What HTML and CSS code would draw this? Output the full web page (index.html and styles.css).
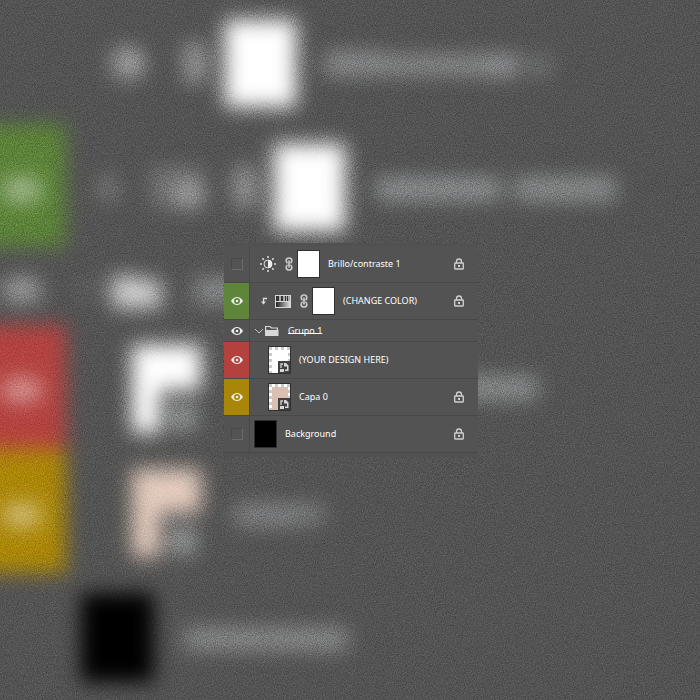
FILE: index.html
```html
<!DOCTYPE html>
<html lang="es">
  <head>
    <meta charset="UTF-8" />
    <meta name="viewport" content="width=device-width, initial-scale=1.0" />
    <title>Capas</title>
    <link rel="stylesheet" href="styles.css">
  </head>
  <body>
    <!-- Icons used more than once -->
    <svg class="sprite" aria-hidden="true">
      <symbol id="eye" viewBox="0 0 12 10">
        <path d="M0 5Q2.500 1 6 1Q9.500 1 12 5Q9.500 9 6 9Q2.500 9 0 5Z" fill="#ececec" />
        <circle class="pupil" cx="6" cy="5" r="3" />
        <circle cx="6" cy="5" r="1.300" fill="#ececec" />
      </symbol>
      <symbol id="lock" viewBox="0 0 10 12">
        <path d="M2.500 5V3.500a2.500 2.500 0 0 1 5 0V5" fill="none" stroke="#d0d0d0" stroke-width="1.300" />
        <rect x=".7" y="5" width="8.600" height="6" rx=".5" fill="none" stroke="#d0d0d0" stroke-width="1.300" />
        <rect x="4" y="7" width="2" height="2" fill="#d0d0d0" />
      </symbol>
      <symbol id="chain" viewBox="0 0 8 14">
        <g fill="none" stroke="#c8c8c8" stroke-width="1.700">
          <path d="M2.600 6Q1.200 5.500 1.200 3.500Q1.200 1 4 1T6.800 3.500Q6.800 5.500 5.400 6" />
          <path d="M2.600 8Q1.200 8.500 1.200 10.500Q1.200 13 4 13T6.800 10.500Q6.800 8.500 5.400 8" />
          <path d="M4 3.500V10.500" />
        </g>
      </symbol>
      <symbol id="smart" viewBox="0 0 12 12">
        <rect width="12" height="12" fill="#414141" />
        <path d="M3 7V3H5" fill="none" stroke="#d6d6d6" stroke-width="1.300" />
        <path d="M6 2H8L10.500 4.500V10H7V8.500H9V5.500H6Z" fill="#d6d6d6" />
        <rect x="2" y="8" width="4" height="3" fill="#d6d6d6" />
      </symbol>
      <pattern id="checker" width="6" height="6" patternUnits="userSpaceOnUse">
        <rect width="6" height="6" fill="#fff" />
        <path d="M0 0H3V3H0ZM3 3H6V6H3Z" fill="#c9c9c9" />
      </pattern>
    </svg>

    <svg class="backdrop" viewBox="0 0 700 700" preserveAspectRatio="xMidYMid slice" aria-hidden="true">
      <filter id="soft" x="-100" y="-100" width="900" height="900" filterUnits="userSpaceOnUse" color-interpolation-filters="sRGB">
        <feGaussianBlur stdDeviation="10" />
      </filter>
      <filter id="grain" x="0" y="0" width="700" height="700" filterUnits="userSpaceOnUse" color-interpolation-filters="sRGB">
        <feTurbulence type="fractalNoise" baseFrequency=".9" numOctaves="3" />
        <feColorMatrix values="1 0 0 0 0  1 0 0 0 0  1 0 0 0 0  0 0 0 0 1" />
      </filter>
      <rect width="700" height="700" fill="#535353" />
      <g filter="url(#soft)">
        <!-- colour tags -->
        <path d="M-60 124H66V247H-60Z" fill="#5b8238" />
        <path d="M-60 325H66V449H-60Z" fill="#b3423f" />
        <path d="M-60 449H66V573H-60Z" fill="#aa8608" />
        <g fill="#fff">
          <ellipse cx="22" cy="190" rx="21" ry="12" opacity=".46" />
          <ellipse cx="22" cy="290" rx="21" ry="13" opacity=".42" />
          <ellipse cx="22" cy="390" rx="21" ry="12" opacity=".46" />
          <ellipse cx="22" cy="515" rx="21" ry="12" opacity=".46" />
        </g>
        <!-- row icons -->
        <g fill="#e6e6e6">
          <circle cx="127" cy="63" r="19" opacity=".32" />
          <circle cx="131" cy="63" r="9" opacity=".6" />
          <rect x="184" y="42" width="22" height="42" rx="8" opacity=".46" />
          <rect x="99" y="176" width="18" height="24" opacity=".28" />
          <rect x="150" y="166" width="53" height="42" opacity=".2" />
          <rect x="176" y="182" width="27" height="25" opacity=".42" />
          <rect x="234" y="166" width="22" height="42" rx="8" opacity=".46" />
          <rect x="76" y="282" width="28" height="12" opacity=".12" />
          <path d="M112 276H134L140 280H161V308H112Z" opacity=".85" />
        </g>
        <!-- layer names -->
        <g fill="#c6c9cb">
          <rect x="324" y="52" width="60" height="23" opacity=".48" />
          <rect x="384" y="55" width="134" height="20" opacity=".46" />
          <rect x="486" y="55" width="34" height="22" opacity=".2" />
          <rect x="528" y="55" width="24" height="20" opacity=".26" />
          <rect x="376" y="178" width="124" height="22" opacity=".52" />
          <rect x="514" y="178" width="102" height="22" opacity=".5" />
          <rect x="194" y="278" width="112" height="26" opacity=".44" />
          <rect x="420" y="377" width="118" height="22" opacity=".5" />
          <rect x="234" y="504" width="62" height="22" opacity=".4" />
          <rect x="296" y="504" width="28" height="20" opacity=".34" />
          <rect x="184" y="628" width="164" height="22" opacity=".46" />
        </g>
        <!-- thumbnails -->
        <rect x="225" y="20" width="71" height="87" fill="#fff" />
        <rect x="274" y="144" width="71" height="87" fill="#fff" />
        <path d="M132 345H201V390H160V433H132Z" fill="#fff" />
        <path d="M132 469H201V513H160V557H132Z" fill="#e3cbbd" />
        <g fill="#aeb0b0">
          <rect x="170" y="404" width="26" height="26" opacity=".75" />
          <rect x="170" y="528" width="26" height="26" opacity=".75" />
        </g>
        <rect x="81" y="593" width="73" height="89" fill="#000" />
      </g>
      <rect class="grain" width="700" height="700" filter="url(#grain)" />
    </svg>

    <main class="stage">
      <ul class="panel">
        <li class="layer">
          <label class="tag"><input type="checkbox" aria-label="Brillo/contraste 1"><svg class="eye"><use href="#eye" /></svg></label>
          <div class="info adjustment">
            <svg class="adjust" viewBox="0 0 16 16">
              <g stroke="#dedede" stroke-width="1.500">
                <path d="M8 0V2M8 14V16M0 8H2M14 8H16M2.400 2.400L3.800 3.800M12.200 12.200L13.600 13.600M2.400 13.600L3.800 12.200M12.200 3.800L13.600 2.400" />
                <circle cx="8" cy="8" r="4" fill="none" stroke-width="1" />
              </g>
              <path d="M8 4A4 4 0 0 1 8 12Z" fill="#eee" />
            </svg>
            <svg class="chain"><use href="#chain" /></svg>
            <span class="thumb"></span>
            <span class="name">Brillo/contraste 1</span>
            <svg class="lock"><use href="#lock" /></svg>
          </div>
        </li>
        <li class="layer">
          <label class="tag green"><input type="checkbox" aria-label="(CHANGE COLOR)" checked><svg class="eye"><use href="#eye" /></svg></label>
          <div class="info adjustment">
            <svg class="clip" viewBox="0 0 8 10"><path d="M7 2.500H3.500V7" fill="none" stroke="#ddd" stroke-width="1.300" /><path d="M1 5.500H6L3.500 8.500Z" fill="#ddd" /></svg>
            <svg class="adjust" viewBox="0 0 16 16">
              <linearGradient id="ramp"><stop stop-color="#222" /><stop offset="1" stop-color="#ddd" /></linearGradient>
              <rect x=".5" y="2.500" width="15" height="12" fill="#333" stroke="#d8d8d8" />
              <path d="M4 3H6V8H4ZM8 3H10V8H8ZM11 3H12V8H11ZM13 3H15V8H13Z" fill="#aaa" />
              <path d="M1 8.500H15" stroke="#d8d8d8" />
              <rect x="1" y="9" width="14" height="5" fill="url(#ramp)" />
            </svg>
            <svg class="chain"><use href="#chain" /></svg>
            <span class="thumb"></span>
            <span class="name">(CHANGE COLOR)</span>
            <svg class="lock"><use href="#lock" /></svg>
          </div>
        </li>
        <li class="layer group">
          <label class="tag"><input type="checkbox" aria-label="Grupo 1" checked><svg class="eye"><use href="#eye" /></svg></label>
          <div class="info">
            <button class="toggle" aria-label="Abrir grupo"><svg viewBox="0 0 10 6"><path d="M1 1L5 5L9 1" fill="none" stroke="#c4c4c4" /></svg></button>
            <svg class="folder" viewBox="0 0 14 12"><path d="M.6 10.500V1.500H5L6.500 3H12.400V10.500Z" fill="none" stroke="#d8d8d8" stroke-width="1.200" /><path d="M1 5H13.500V11H1Z" fill="#d8d8d8" /></svg>
            <span class="name">Grupo 1</span>
          </div>
        </li>
        <li class="layer">
          <label class="tag red"><input type="checkbox" aria-label="(YOUR DESIGN HERE)" checked><svg class="eye"><use href="#eye" /></svg></label>
          <div class="info nested">
            <svg class="thumb" viewBox="0 0 21 26">
              <rect width="21" height="26" fill="url(#checker)" />
              <rect x="3" y="3" width="16" height="23" fill="#fff" />
              <use href="#smart" x="9" y="14" width="12" height="12" />
            </svg>
            <span class="name">(YOUR DESIGN HERE)</span>
          </div>
        </li>
        <li class="layer">
          <label class="tag yellow"><input type="checkbox" aria-label="Capa 0" checked><svg class="eye"><use href="#eye" /></svg></label>
          <div class="info nested">
            <svg class="thumb" viewBox="0 0 21 26">
              <rect width="21" height="26" fill="url(#checker)" />
              <rect x="3" y="3" width="16" height="23" fill="#d9c0b1" />
              <use href="#smart" x="9" y="14" width="12" height="12" />
            </svg>
            <span class="name">Capa 0</span>
            <svg class="lock"><use href="#lock" /></svg>
          </div>
        </li>
        <li class="layer">
          <label class="tag"><input type="checkbox" aria-label="Background"><svg class="eye"><use href="#eye" /></svg></label>
          <div class="info">
            <span class="thumb black"></span>
            <span class="name">Background</span>
            <svg class="lock"><use href="#lock" /></svg>
          </div>
        </li>
      </ul>
    </main>
  </body>
</html>
```
FILE: styles.css
```css
* {
  box-sizing: border-box;
}

body {
  margin: 0;
  background: #535353;
  color: #fff;
  font-family: "Noto Sans", "Open Sans", sans-serif;
  font-size: 9px;
  line-height: 12px;
}

.sprite {
  position: absolute;
  width: 0;
  height: 0;
}

.backdrop {
  position: fixed;
  inset: 0;
  width: 100%;
  height: 100%;
}

.grain {
  mix-blend-mode: overlay;
  opacity: 0.35;
}

.stage {
  position: relative;
  display: flex;
  align-items: center;
  min-height: 100vh;
  padding-left: 32%;
}

.panel {
  width: 254px;
  margin: 0;
  padding: 3px 0 4px;
  list-style: none;
  background: #515151;
}

.layer {
  display: flex;
  height: 37px;
  background: #535353;
  border-bottom: 1px solid #484848;
}

.group {
  height: 22px;
}

.tag {
  display: grid;
  place-items: center;
  width: 26px;
  border-right: 1px solid #484848;
  color: #535353;
}

.tag input,
.tag .eye {
  grid-area: 1 / 1;
}

.tag input {
  appearance: none;
  width: 12px;
  height: 12px;
  margin: 0;
  border: 1px solid #484848;
  border-right-color: #6a6a6a;
  border-bottom-color: #6a6a6a;
}

.tag input:checked {
  opacity: 0;
}

.tag input:not(:checked) + .eye {
  visibility: hidden;
}

.eye {
  width: 12px;
  height: 10px;
}

.pupil {
  fill: currentColor;
}

.green {
  background: #5e853a;
  color: #5e853a;
}

.red {
  background: #b3423f;
  color: #b3423f;
}

.yellow {
  background: #aa8608;
  color: #aa8608;
}

.info {
  flex: 1;
  display: flex;
  align-items: center;
  padding: 0 14px 0 4px;
}

.info svg {
  flex: none;
}

.adjustment {
  padding-left: 10px;
}

.nested {
  padding-left: 18px;
}

.adjust {
  width: 16px;
  height: 16px;
  margin-right: 9px;
}

.chain {
  width: 8px;
  height: 14px;
  margin-right: 4px;
}

.clip {
  width: 8px;
  height: 10px;
  margin-right: 7px;
}

.thumb {
  flex: none;
  width: 23px;
  height: 28px;
  margin-right: 8px;
  border: 1px solid #303030;
  background: #fff;
}

.black {
  background: #000;
}

.name {
  flex: 1;
  white-space: nowrap;
}

.lock {
  width: 10px;
  height: 12px;
}

.toggle {
  display: flex;
  width: 10px;
  margin-right: 1px;
  padding: 0;
  border: 0;
  background: none;
}

.toggle svg {
  width: 10px;
  height: 6px;
}

.folder {
  width: 14px;
  height: 12px;
  margin-right: 9px;
}

.group .name {
  text-decoration: underline;
  text-underline-offset: -1px;
  text-decoration-skip-ink: none;
}
```
